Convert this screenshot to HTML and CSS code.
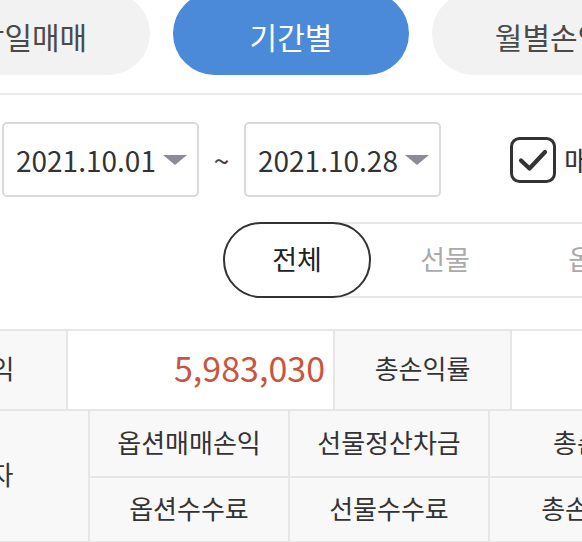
FILE: index.html
```html
<!DOCTYPE html>
<html lang="ko">
<head>
<meta charset="utf-8">
<link rel="stylesheet" href="styles.css">
</head>
<body>
<div class="page">
  <div class="tabs">
    <div class="tab">당일매매</div>
    <div class="tab tab-active">기간별</div>
    <div class="tab">월별손익</div>
  </div>
  <div class="divider"></div>

  <div class="date-row">
    <div class="date-box">
      <span class="date-text">2021.10.01</span>
      <svg class="caret" width="24" height="10" viewBox="0 0 24 10"><path d="M0 0 H24 L12 10 Z" fill="#8c8c96"/></svg>
    </div>
    <span class="tilde">~</span>
    <div class="date-box">
      <span class="date-text">2021.10.28</span>
      <svg class="caret" width="24" height="10" viewBox="0 0 24 10"><path d="M0 0 H24 L12 10 Z" fill="#8c8c96"/></svg>
    </div>
    <div class="check">
      <svg width="46" height="46" viewBox="0 0 46 46">
        <rect x="1.5" y="1.5" width="43" height="43" rx="8" fill="#fff" stroke="#333" stroke-width="3"/>
        <path d="M11 23.5 L19.5 31.5 L35 15" fill="none" stroke="#333" stroke-width="4.2" stroke-linecap="round" stroke-linejoin="round"/>
      </svg>
      <span class="check-label">매매일만</span>
    </div>
  </div>

  <div class="seg-row">
    <div class="segment">
      <div class="seg-item seg-active">전체</div>
      <div class="seg-item">선물</div>
      <div class="seg-item">옵션</div>
    </div>
  </div>

  <div class="table">
    <div class="row1">
      <div class="cell head">총손익</div>
      <div class="cell val red">5,983,030</div>
      <div class="cell head">총손익률</div>
      <div class="cell val"></div>
    </div>
    <div class="row23">
      <div class="cell head span2">일자</div>
      <div class="cell head">옵션매매손익</div>
      <div class="cell head">선물정산차금</div>
      <div class="cell head">총손익</div>
      <div class="cell head">옵션수수료</div>
      <div class="cell head">선물수수료</div>
      <div class="cell head">총손익률</div>
    </div>
  </div>
</div>
</body>
</html>
```

FILE: styles.css
```css
html, body {
  margin: 0;
  padding: 0;
  background: #fff;
}
body {
  width: 582px;
  height: 542px;
  overflow: hidden;
  font-family: "Noto Sans CJK KR", "Noto Sans", sans-serif;
  color: #333;
}
.page {
  width: 582px;
  overflow: hidden;
}
.tabs {
  display: flex;
  justify-content: center;
  gap: 23px;
  margin-top: -8px;
  height: 83px;
}
.tab {
  flex: 0 0 236px;
  height: 83px;
  border-radius: 42px;
  background: #f2f2f2;
  color: #4a4a4a;
  font-size: 30px;
  display: flex;
  align-items: center;
  justify-content: center;
  padding-top: 4px;
  box-sizing: border-box;
}
.tab-active {
  background: #4a8ad9;
  color: #fff;
}
.divider {
  margin-top: 18px;
  height: 2px;
  background: #ebebeb;
}
.date-row {
  display: flex;
  align-items: center;
  margin-top: 27px;
  padding-left: 2px;
  height: 75px;
}
.date-box {
  flex: none;
  width: 197px;
  height: 75px;
  box-sizing: border-box;
  border: 2px solid #dadada;
  border-radius: 5px;
  display: flex;
  align-items: center;
  padding-left: 12px;
  gap: 7px;
}
.date-text {
  font-size: 28px;
  color: #333;
  white-space: nowrap;
}
.caret {
  flex: none;
  margin-top: 1px;
}
.tilde {
  flex: none;
  width: 45px;
  text-align: center;
  font-size: 28px;
  color: #444;
}
.check {
  flex: none;
  display: flex;
  align-items: center;
  margin-left: 69px;
  gap: 8px;
}
.check svg {
  flex: none;
}
.check-label {
  font-size: 28px;
  white-space: nowrap;
  color: #333;
}
.seg-row {
  margin-top: 25px;
  padding-left: 223px;
  height: 76px;
}
.segment {
  display: flex;
  width: 500px;
  height: 76px;
  box-sizing: border-box;
  border: 2px solid #e8e8e8;
  border-right: none;
  border-radius: 38px 0 0 38px;
}
.seg-item {
  flex: 0 0 148px;
  display: flex;
  align-items: center;
  justify-content: center;
  font-size: 27px;
  color: #aaa;
  padding-bottom: 3px;
  box-sizing: border-box;
}
.seg-active {
  margin: -2px 0 -2px -2px;
  flex-basis: 148px;
  height: 76px;
  border: 2px solid #333;
  border-radius: 38px;
  background: #fff;
  color: #222;
}
.table {
  margin-top: 31px;
  margin-left: -109px;
  width: 820px;
  background: #e6e6e6;
  padding: 2px 0;
  display: flex;
  flex-direction: column;
  gap: 2px;
}
.row1 {
  display: grid;
  grid-template-columns: 175px 265px 175px 200px;
  column-gap: 2px;
  height: 78px;
}
.row23 {
  display: grid;
  grid-template-columns: 197px 198px 198px 198px;
  grid-template-rows: 65px 63px;
  gap: 2px;
}
.cell {
  display: flex;
  align-items: center;
  justify-content: center;
  font-size: 26px;
  color: #333;
  background: #f8f8f8;
  white-space: nowrap;
  padding-bottom: 5px;
  box-sizing: border-box;
}
.head {
  background: #f8f8f8;
}
.val {
  background: #fff;
  justify-content: flex-end;
  padding-right: 8px;
}
.red {
  color: #c9553f;
  font-size: 34px;
}
.span2 {
  grid-row: span 2;
}
```
